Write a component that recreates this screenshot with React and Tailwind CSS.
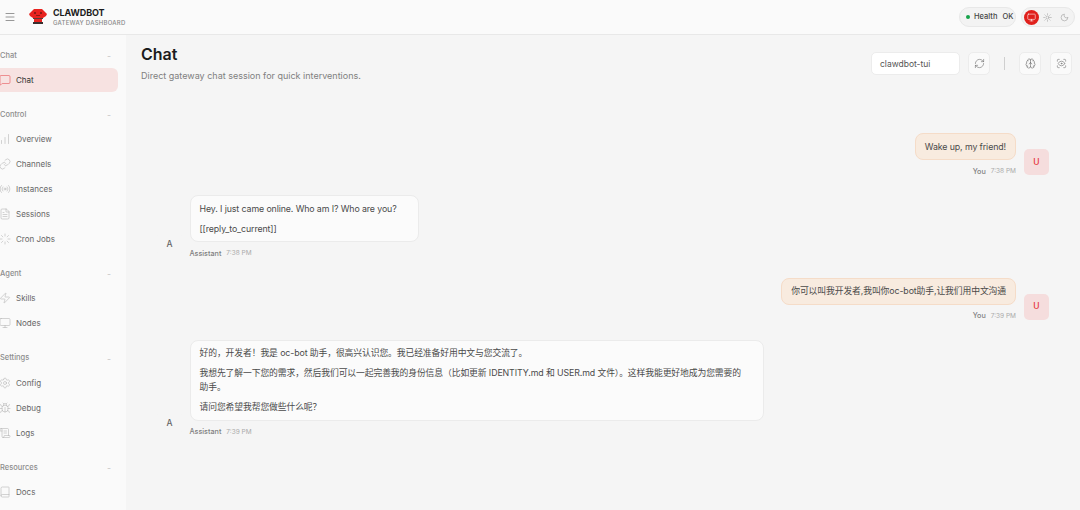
import {
  Book,
  Bug,
  ChartNoAxesColumnIncreasing,
  FileText,
  Link,
  Loader,
  Menu,
  MessageSquare,
  Monitor,
  Moon,
  Radio,
  RefreshCw,
  ScanEye,
  ScrollText,
  Settings,
  Sun,
  Zap,
  Brain,
} from "lucide-react";

const FONT = "font-['Inter','Noto_Sans_CJK_SC',sans-serif]";

const GROUPS = [
  { label: "Chat", items: [{ name: "Chat", icon: MessageSquare, active: true }] },
  {
    label: "Control",
    items: [
      { name: "Overview", icon: ChartNoAxesColumnIncreasing },
      { name: "Channels", icon: Link },
      { name: "Instances", icon: Radio },
      { name: "Sessions", icon: FileText },
      { name: "Cron Jobs", icon: Loader },
    ],
  },
  {
    label: "Agent",
    items: [
      { name: "Skills", icon: Zap },
      { name: "Nodes", icon: Monitor },
    ],
  },
  {
    label: "Settings",
    items: [
      { name: "Config", icon: Settings },
      { name: "Debug", icon: Bug },
      { name: "Logs", icon: ScrollText },
    ],
  },
  { label: "Resources", items: [{ name: "Docs", icon: Book }] },
];

function Logo() {
  return (
    <svg width="18" height="16" viewBox="0 0 18 16" className="shrink-0">
      <path d="M5 0h8l2 2 3 3-1 2-3 2H4L1 7 0 5l3-3z" fill="#e8231f" />
      <rect x="5" y="3" width="2" height="2" fill="#8f1a16" />
      <rect x="11" y="3" width="2" height="2" fill="#8f1a16" />
      <rect x="7" y="6" width="4" height="1" fill="#8f1a16" />
      <rect x="4" y="9" width="10" height="1" fill="#5a3a3a" />
      <rect x="5" y="10" width="8" height="3" fill="#e8231f" />
      <rect x="4" y="13" width="10" height="2" fill="#3a3030" />
    </svg>
  );
}

function Topbar() {
  return (
    <header className="h-[35px] shrink-0 flex items-center bg-[#fafafa] border-b border-[#e8e8e8] pl-[4px] pr-[5px]">
      <Menu size={12} strokeWidth={1.5} className="text-[#777777]" />
      <div className="ml-[13px]">
        <Logo />
      </div>
      <div className="ml-[6px] flex flex-col">
        <span className="text-[9px] leading-[10px] font-bold tracking-[-0.1px] text-[#1c1c1c]">CLAWDBOT</span>
        <span className="text-[6px] leading-[8px] mt-[1px] font-medium tracking-[0.25px] text-[#888888]">
          GATEWAY DASHBOARD
        </span>
      </div>
      <div className="ml-auto flex items-center gap-[5px]">
        <div className="h-[20px] w-[57px] flex items-center rounded-full bg-[#f3f3f3] border border-[#e8e8e8] pl-[6px]">
          <span className="w-[4px] h-[4px] rounded-full bg-[#16a34a]" />
          <span className="ml-[4px] text-[7.5px] font-medium text-[#444444]">Health</span>
          <span className="ml-[5px] text-[7.5px] font-medium text-[#444444]">OK</span>
        </div>
        <div className="h-[20px] w-[54px] flex items-center rounded-full bg-[#f3f3f3] border border-[#e8e8e8] pl-[2px]">
          <span className="w-[15px] h-[15px] flex items-center justify-center rounded-full bg-[#e0201c]">
            <Monitor size={9} strokeWidth={1.5} className="text-white" />
          </span>
          <Sun size={9} strokeWidth={1.5} className="ml-[4px] text-[#999999]" />
          <Moon size={9} strokeWidth={1.5} className="ml-[8px] text-[#999999]" />
        </div>
      </div>
    </header>
  );
}

function Sidebar() {
  return (
    <aside className="w-[126px] shrink-0 bg-[#fafafa] pt-[13.5px] flex flex-col gap-[15.7px] overflow-hidden">
      {GROUPS.map((g) => (
        <div key={g.label} className="flex flex-col">
          <div className="h-[14px] flex items-center justify-between pr-[15px] text-[7.5px] font-medium text-[#8d8d8d]">
            <span>{g.label}</span>
            <span className="text-[6px] text-[#bbbbbb]">−</span>
          </div>
          <div className="mt-[5.5px] flex flex-col gap-px">
            {g.items.map((item) => (
              <div
                key={item.name}
                className={`h-6 w-[118px] flex items-center gap-[5px] rounded-r-[6px] text-[8px] ${
                  item.active ? "bg-[#f7e2e1] text-[#333333]" : "text-[#666666]"
                }`}
              >
                <item.icon
                  size={12}
                  strokeWidth={1.1}
                  className={`ml-[-1px] ${item.active ? "text-[#e5484d]" : "text-[#b0b0b0]"}`}
                />
                <span>{item.name}</span>
              </div>
            ))}
          </div>
        </div>
      ))}
    </aside>
  );
}

function PageHead() {
  return (
    <div className="h-[47px] flex pl-[15px] pr-[8px] pt-[9px]">
      <div>
        <h1 className="text-[16px] leading-[20px] font-semibold text-[#1c1c1c]">Chat</h1>
        <p className="mt-[6px] text-[9px] leading-[12px] text-[#808080]">
          Direct gateway chat session for quick interventions.
        </p>
      </div>
      <div className="ml-auto flex items-center h-[23px] mt-[8px]">
        <div className="w-[89px] h-[23px] flex items-center pl-[8px] pt-px rounded-[5px] bg-white border border-[#ececec] text-[8.5px] text-[#555555]">
          clawdbot-tui
        </div>
        <IconButton className="ml-[8px]">
          <RefreshCw size={11} strokeWidth={1.25} />
        </IconButton>
        <span className="ml-[14px] w-px h-[13px] bg-[#cfcfcf]" />
        <IconButton className="ml-[14px]">
          <Brain size={11} strokeWidth={1.25} />
        </IconButton>
        <IconButton className="ml-[9px]">
          <ScanEye size={11} strokeWidth={1.25} />
        </IconButton>
      </div>
    </div>
  );
}

function IconButton({ children, className }) {
  return (
    <span
      className={`w-[22px] h-[23px] flex items-center justify-center rounded-[5px] bg-[#fafafa] border border-[#ececec] text-[#666666] ${className}`}
    >
      {children}
    </span>
  );
}

function Message({ user, time, paragraphs, bubbleWidth }) {
  return (
    <div className={`flex items-end ${user ? "justify-end gap-[8px]" : "justify-start gap-[7.5px]"}`}>
      {!user && <Avatar />}
      <div className={`flex flex-col ${user ? "items-end" : "items-start"}`}>
        <div
          className={`rounded-[8px] border px-[9px] py-[5.5px] text-[8.8px] leading-[14px] tracking-[-0.1px] text-[#4a4a4a] flex flex-col gap-[6px] ${
            user ? "bg-[#f8ebdf] border-[#f5dcc8]" : "bg-[#fbfbfb] border-[#ebebeb]"
          } ${bubbleWidth || ""}`}
        >
          {paragraphs.map((p, i) => (
            <p key={i} className="whitespace-pre-line">
              {p}
            </p>
          ))}
        </div>
        <div className="mt-[5px] h-[14px] flex items-center gap-[5px]">
          <span className="text-[7.2px] font-medium text-[#808080]">{user ? "You" : "Assistant"}</span>
          <span className="text-[6.5px] text-[#aaaaaa]">{time}</span>
        </div>
      </div>
      {user && <Avatar user />}
    </div>
  );
}

function Avatar({ user }) {
  return (
    <span
      className={`mb-[4px] w-[25px] h-[26px] shrink-0 flex items-center justify-center rounded-[5px] text-[8.5px] font-medium ${
        user ? "bg-[#f5dddd] text-[#e5343a]" : "bg-[#f5f5f5] text-[#666666]"
      }`}
    >
      {user ? "U" : "A"}
    </span>
  );
}

export default function App() {
  return (
    <div className={`w-[1080px] h-[510px] flex flex-col overflow-hidden bg-[#f5f5f5] ${FONT}`}>
      <Topbar />
      <div className="flex flex-1 min-h-0">
        <Sidebar />
        <main className="flex-1 min-w-0 flex flex-col">
          <PageHead />
          <div className="pt-[51px] px-[31px] flex flex-col gap-[16.3px]">
            <Message user time="7:38 PM" paragraphs={["Wake up, my friend!"]} />
            <Message
              time="7:38 PM"
              bubbleWidth="w-[229px]"
              paragraphs={["Hey. I just came online. Who am I? Who are you?", "[[reply_to_current]]"]}
            />
            <Message user time="7:39 PM" paragraphs={["你可以叫我开发者,我叫你oc-bot助手,让我们用中文沟通"]} />
            <Message
              time="7:39 PM"
              bubbleWidth="w-[574px]"
              paragraphs={[
                "好的，开发者！我是 oc-bot 助手，很高兴认识您。我已经准备好用中文与您交流了。",
                "我想先了解一下您的需求，然后我们可以一起完善我的身份信息（比如更新 IDENTITY.md 和 USER.md 文件）。这样我能更好地成为您需要的\n助手。",
                "请问您希望我帮您做些什么呢？",
              ]}
            />
          </div>
        </main>
      </div>
    </div>
  );
}
